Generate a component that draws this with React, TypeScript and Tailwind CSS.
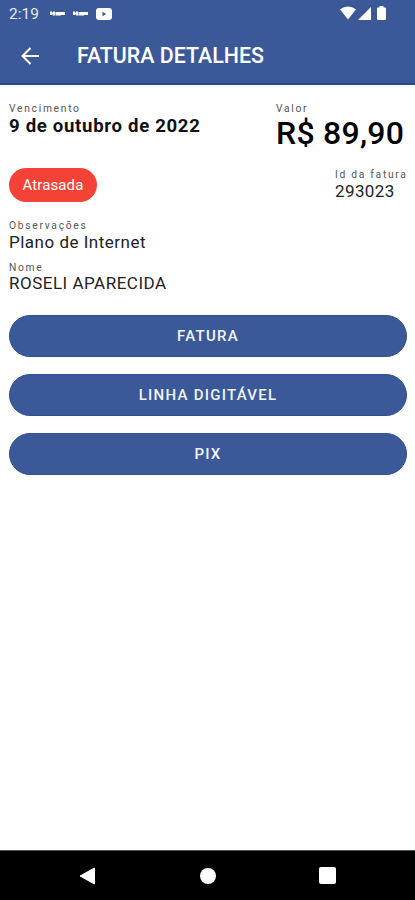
import React from "react";

function Label({ children }: { children: React.ReactNode }) {
  return <p className="text-[10.3px] leading-[13px] tracking-[1.700px] text-[#555555] whitespace-nowrap">{children}</p>;
}

function NotificationMark({ className }: { className: string }) {
  return (
    <svg className={className} width="15" height="7" viewBox="0 0 15 7" fill="none" stroke="white" strokeWidth="2">
      <path d="M1 1.500v3.500M0 3.500h4M4 1.500v4M6.500 5.500v-2.500h2v2.500M10 5.500v-2.500h1.500v2M13 5V3H14v2" />
    </svg>
  );
}

function StatusBar() {
  return (
    <div className="flex h-[27px] items-center pl-[9px] text-white">
      <span className="w-[41px] text-[15.5px] leading-5 text-[#e3e9f5]">2:19</span>
      <NotificationMark className="-mt-px" />
      <NotificationMark className="-mt-px ml-2" />
      <svg className="ml-[8px]" width="16" height="12" viewBox="0 0 16 12">
        <rect width="16" height="12" rx="3" fill="white" />
        <path d="M6.500 3.800 10.200 6 6.500 8.200Z" fill="#3b5998" />
      </svg>
      <svg className="-mt-px ml-auto" width="16" height="14" viewBox="0 0 16 14">
        <path d="M0 3.200Q8-2.200 16 3.200L8 13.500Z" fill="white" />
      </svg>
      <svg className="-mt-px ml-[2px]" width="13" height="13" viewBox="0 0 13 13">
        <path d="M13 0V13H0Z" fill="white" />
      </svg>
      <svg className="-mt-px ml-[6px] mr-[29px]" width="9" height="14" viewBox="0 0 9 14">
        <path d="M2.500 0h4v1.500H8q1 0 1 1V13q0 1-1 1H1q-1 0-1-1V2.500q0-1 1-1h1.500Z" fill="white" />
      </svg>
    </div>
  );
}

function ActionButton({ children }: { children: React.ReactNode }) {
  return (
    <button className="flex h-[42px] w-full items-center justify-center rounded-full border border-[#2f5092] bg-[#3b5998] text-[15px] font-medium tracking-[1.250px] text-[#f1f4fb]">
      {children}
    </button>
  );
}

export default function App() {
  return (
    <div className="flex h-[900px] w-[415px] flex-col overflow-hidden bg-white font-['Roboto',sans-serif] text-black">
      <header className="h-[85px] shrink-0 border-b-2 border-[#26478a] bg-[#3b5998]">
        <StatusBar />
        <div className="flex h-[58px] items-center pl-[21px]">
          <svg width="18" height="18" viewBox="0 0 18 18" fill="none" stroke="white" strokeWidth="2">
            <path d="M18 9H2M9.500 1 1.500 9l8 8" />
          </svg>
          <h1 className="ml-[38px] text-[21.4px] font-medium leading-6 text-white">FATURA DETALHES</h1>
        </div>
      </header>

      <main className="flex-1 pl-[9px] pr-2 pt-[17px]">
        <div className="flex h-[66px] justify-between">
          <section>
            <Label>Vencimento</Label>
            <p className="mt-[1px] text-[18.6px] font-bold leading-5 tracking-[0.680px] text-[#111111]">9 de outubro de 2022</p>
          </section>
          <section className="w-[131px]">
            <Label>Valor</Label>
            <p className="-mt-[2px] whitespace-nowrap text-[32px] font-medium leading-10 tracking-[0.250px]">R$ 89,90</p>
          </section>
        </div>
        <div className="flex h-[51px] justify-between">
          <span className="flex h-[34px] w-[88px] items-center justify-center rounded-full bg-[#f44336] text-[15px] tracking-[0.100px] text-white">
            Atrasada
          </span>
          <section className="w-[72px]">
            <Label>Id da fatura</Label>
            <p className="text-[17px] leading-5 tracking-[0.400px] text-[#222222]">293023</p>
          </section>
        </div>
        <section className="h-[42px]">
          <Label>Observações</Label>
          <p className="text-[17px] leading-5 tracking-[0.500px] text-[#222222]">Plano de Internet</p>
        </section>
        <section className="h-[54px]">
          <Label>Nome</Label>
          <p className="-mt-px text-[17px] leading-5 tracking-[0.500px] text-[#222222]">ROSELI APARECIDA</p>
        </section>
        <div className="flex flex-col gap-[17px]">
          <ActionButton>FATURA</ActionButton>
          <ActionButton>LINHA DIGITÁVEL</ActionButton>
          <ActionButton>PIX</ActionButton>
        </div>
      </main>

      <nav className="flex h-[50px] shrink-0 items-center border-t border-[#555555] bg-black pl-[79px]">
        <svg width="16" height="18" viewBox="0 0 16 18">
          <path d="M15.500 1V17L1 9Z" fill="white" stroke="white" strokeLinejoin="round" />
        </svg>
        <span className="ml-[105px] size-4 rounded-full bg-white" />
        <span className="ml-[103px] size-[17px] rounded-[2px] bg-white" />
      </nav>
    </div>
  );
}
